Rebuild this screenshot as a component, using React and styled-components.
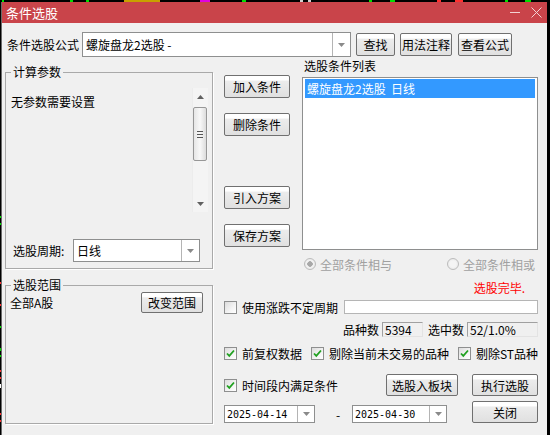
import React from 'react';
import styled, { createGlobalStyle } from 'styled-components';

const GlobalStyle = createGlobalStyle`
  html, body {
    margin: 0;
    padding: 0;
    background: #000;
    overflow: hidden;
  }
  body {
    font-family: "Noto Sans CJK SC", "Noto Sans", sans-serif;
    font-size: 12px;
    color: #000;
  }
`;

// bits of the quote chart that peek out around the dialog
const chartMarks = [
  { x: 2, y: 0, w: 2, h: 2, c: '#00e000' },
  { x: 70, y: 0, w: 3, h: 2, c: '#00e000' },
  { x: 86, y: 0, w: 3, h: 2, c: '#00e000' },
  { x: 124, y: 0, w: 36, h: 2, c: '#c8a000' },
  { x: 200, y: 0, w: 10, h: 2, c: '#e000e0' },
  { x: 242, y: 0, w: 4, h: 2, c: '#00e000' },
  { x: 300, y: 0, w: 3, h: 2, c: '#d0d0d0' },
  { x: 308, y: 0, w: 3, h: 2, c: '#d0d0d0' },
  { x: 369, y: 0, w: 3, h: 2, c: '#00e000' },
  { x: 390, y: 0, w: 5, h: 2, c: '#00e000' },
  { x: 437, y: 0, w: 4, h: 2, c: '#ff3030' },
  { x: 455, y: 0, w: 8, h: 2, c: '#ff3030' },
  { x: 505, y: 0, w: 3, h: 2, c: '#00e000' },
  { x: 525, y: 0, w: 6, h: 2, c: '#00e000' },
  { x: 0, y: 216, w: 1, h: 2, c: '#00e000' },
  { x: 0, y: 223, w: 1, h: 2, c: '#00e000' },
  { x: 0, y: 282, w: 1, h: 2, c: '#ff3030' },
  { x: 0, y: 304, w: 1, h: 2, c: '#ff3030' },
  { x: 0, y: 326, w: 1, h: 2, c: '#00e000' },
  { x: 0, y: 348, w: 1, h: 3, c: '#00e000' },
  { x: 0, y: 355, w: 1, h: 2, c: '#00e000' },
  { x: 0, y: 370, w: 1, h: 2, c: '#ff3030' },
  { x: 0, y: 377, w: 1, h: 2, c: '#ff3030' },
  { x: 0, y: 384, w: 1, h: 4, c: '#ffffff' },
  { x: 0, y: 413, w: 1, h: 2, c: '#ff3030' },
  { x: 0, y: 420, w: 1, h: 2, c: '#ff3030' },
];

const Chart = () => (
  <ChartLayer width="550" height="435">
    {chartMarks.map((m, i) => (
      <rect key={i} x={m.x} y={m.y} width={m.w} height={m.h} fill={m.c} />
    ))}
  </ChartLayer>
);

const Arrow = () => (
  <svg width="7" height="4" viewBox="0 0 7 4">
    <path d="M0 0h7L3.5 4z" fill="#8a8a8a" />
  </svg>
);

const Check = ({ checked }) => (
  <CheckBox>
    {checked && (
      <svg width="9" height="9" viewBox="0 0 9 9">
        <path d="M1 4.5l2.3 2.4L8 1.5" fill="none" stroke="#21a121" strokeWidth="1.8" />
      </svg>
    )}
  </CheckBox>
);

const CheckItem = ({ checked, children }) => (
  <CheckLabel>
    <Check checked={checked} />
    <span>{children}</span>
  </CheckLabel>
);

const Radio = ({ on, children }) => (
  <RadioLabel>
    <RadioDot $on={on} />
    <span>{children}</span>
  </RadioLabel>
);

const Combo = ({ width, height, children, mono }) => (
  <ComboBox style={{ width, height }}>
    <ComboText $mono={mono}>{children}</ComboText>
    <ComboDrop $narrow={mono}>
      <Arrow />
    </ComboDrop>
  </ComboBox>
);

const App = () => {
  return (
    <Page>
      <GlobalStyle />
      <Chart />
      <Window>
        <TitleBar>
          <Title>条件选股</Title>
          <TitleButtons>
            <svg width="11" height="11" viewBox="0 0 11 11">
              <path d="M0 5.5h10" stroke="#f3d2d3" strokeWidth="1" />
            </svg>
            <svg width="11" height="11" viewBox="0 0 11 11">
              <path d="M0.5 0.5l10 10M10.5 0.5l-10 10" stroke="#f3d2d3" strokeWidth="1" />
            </svg>
          </TitleButtons>
        </TitleBar>

        <Body>
          <FormulaRow>
            <FieldLabel>条件选股公式</FieldLabel>
            <Combo width={269} height={25}>螺旋盘龙2选股 -</Combo>
            <Button $w={39} $ml={5}>查找</Button>
            <Button $w={52} $ml={5}>用法注释</Button>
            <Button $w={54} $ml={6}>查看公式</Button>
          </FormulaRow>

          <Main>
            <LeftCol>
              <Group $h={197}>
                <Legend>计算参数</Legend>
                <ParamArea>
                  <ParamText>无参数需要设置</ParamText>
                  <ScrollBar>
                    <ScrollArrow>
                      <svg width="7" height="4" viewBox="0 0 7 4">
                        <path d="M0 4h7L3.5 0z" fill="#606060" />
                      </svg>
                    </ScrollArrow>
                    <ScrollTrack>
                      <Thumb>
                        <Grip />
                        <Grip />
                        <Grip />
                      </Thumb>
                    </ScrollTrack>
                    <ScrollArrow>
                      <svg width="7" height="4" viewBox="0 0 7 4">
                        <path d="M0 0h7L3.5 4z" fill="#606060" />
                      </svg>
                    </ScrollArrow>
                  </ScrollBar>
                </ParamArea>
                <PeriodRow>
                  <PeriodLabel>选股周期:</PeriodLabel>
                  <Combo width={127} height={23}>日线</Combo>
                </PeriodRow>
              </Group>

              <Group $h={139} $mt={16}>
                <Legend>选股范围</Legend>
                <RangeRow>
                  <span>全部A股</span>
                  <Button $w={62} $h={21}>改变范围</Button>
                </RangeRow>
              </Group>
            </LeftCol>

            <RightArea>
              <TopSection>
                <ButtonCol>
                  <Button $w={66} $mt={18}>加入条件</Button>
                  <Button $w={66} $mt={15}>删除条件</Button>
                  <Button $w={66} $mt={50}>引入方案</Button>
                  <Button $w={66} $mt={15}>保存方案</Button>
                </ButtonCol>
                <ListCol>
                  <ListLabel>选股条件列表</ListLabel>
                  <ListBox>
                    <ListItem $selected>螺旋盘龙2选股&nbsp;&nbsp;日线</ListItem>
                  </ListBox>
                </ListCol>
              </TopSection>

              <RadioRow>
                <Radio on>全部条件相与</Radio>
                <Radio>全部条件相或</Radio>
              </RadioRow>

              <StatusRow>选股完毕.</StatusRow>

              <PeriodCheckRow>
                <CheckItem>使用涨跌不定周期</CheckItem>
                <TextInput />
              </PeriodCheckRow>

              <CountsRow>
                <span>品种数</span>
                <CountBox $w={41}>5394</CountBox>
                <span style={{ marginLeft: 5 }}>选中数</span>
                <CountBox $w={71}>52/1.0%</CountBox>
              </CountsRow>

              <OptionsRow>
                <CheckItem checked>前复权数据</CheckItem>
                <CheckItem checked>剔除当前未交易的品种</CheckItem>
                <CheckItem checked>剔除ST品种</CheckItem>
              </OptionsRow>

              <ActionRow>
                <CheckItem checked>时间段内满足条件</CheckItem>
                <Button $w={72} $h={22} $ml="auto">选股入板块</Button>
                <Button $w={66} $h={22} $ml={14}>执行选股</Button>
              </ActionRow>

              <DateRow>
                <DateSlot>
                  <Combo width={91} height={18} mono>2025-04-14</Combo>
                </DateSlot>
                <Dash>-</Dash>
                <DateSlot>
                  <Combo width={95} height={18} mono>2025-04-30</Combo>
                </DateSlot>
                <Button $w={66} $h={22} $ml="auto">关闭</Button>
              </DateRow>
            </RightArea>
          </Main>
        </Body>
      </Window>
    </Page>
  );
};

export default App;

const Page = styled.div`
  position: relative;
  width: 550px;
  height: 435px;
  overflow: hidden;
`;

const ChartLayer = styled.svg`
  position: absolute;
  left: 0;
  top: 0;
`;

const Window = styled.div`
  position: relative;
  box-sizing: border-box;
  margin: 2px 0 0 1px;
  width: 546px;
  height: 433px;
  background: #f0f0f0;
  border-left: 1px solid #6a6a6a;
  display: flex;
  flex-direction: column;
`;

const TitleBar = styled.div`
  height: 21px;
  background: #c9444a;
  display: flex;
  align-items: center;
  padding: 0 5px 0 4px;
  color: #fff;
`;

const Title = styled.span`
  font-size: 13px;
  line-height: 21px;
`;

const TitleButtons = styled.div`
  margin-left: auto;
  display: flex;
  gap: 10px;
  align-items: center;
`;

const Body = styled.div`
  flex: 1;
  padding: 9px 0 0 3px;
`;

const FormulaRow = styled.div`
  display: flex;
  align-items: center;
  height: 25px;
`;

const FieldLabel = styled.span`
  width: 75px;
  margin-left: 2px;
`;

const Button = styled.div`
  box-sizing: border-box;
  width: ${(p) => p.$w}px;
  height: ${(p) => p.$h || 23}px;
  margin-left: ${(p) => (p.$ml === 'auto' ? 'auto' : `${p.$ml || 0}px`)};
  margin-top: ${(p) => p.$mt || 0}px;
  flex-shrink: 0;
  border: 1px solid #707070;
  border-radius: 2px;
  background: linear-gradient(to bottom, #ffffff 0%, #ffffff 18%, #ececec 26%, #e0e0e0 100%);
  display: flex;
  align-items: center;
  justify-content: center;
  font-size: 12px;
  color: #000;
`;

const ComboBox = styled.div`
  box-sizing: border-box;
  display: flex;
  background: #fff;
  border: 1px solid #8e8f8f;
  flex-shrink: 0;
  margin-left: 0;
`;

const ComboText = styled.div`
  flex: 1;
  display: flex;
  align-items: center;
  padding-left: ${(p) => (p.$mono ? 2 : 3)}px;
  font-family: ${(p) => (p.$mono ? '"DejaVu Sans Mono", "Liberation Mono", monospace' : 'inherit')};
  font-size: ${(p) => (p.$mono ? '10px' : '12px')};
  white-space: pre;
`;

const ComboDrop = styled.div`
  width: ${(p) => (p.$narrow ? 16 : 17)}px;
  border-left: 1px solid #b4b4b4;
  display: flex;
  align-items: center;
  justify-content: center;
`;

const Main = styled.div`
  display: flex;
  align-items: flex-start;
`;

const LeftCol = styled.div`
  width: 208px;
  margin-left: 0;
  padding-top: 15px;
  display: flex;
  flex-direction: column;
`;

const Group = styled.div`
  position: relative;
  box-sizing: border-box;
  height: ${(p) => p.$h}px;
  margin-top: ${(p) => p.$mt || 0}px;
  border: 1px solid #a9a9a9;
  box-shadow: 1px 1px 0 #ffffff;
  display: flex;
  flex-direction: column;
`;

const Legend = styled.span`
  position: absolute;
  top: -8px;
  left: 5px;
  padding: 0 2px;
  line-height: 14px;
  background: #f0f0f0;
`;

const ParamArea = styled.div`
  display: flex;
  margin: 15px 4px 0 3px;
  height: 124px;
`;

const ParamText = styled.div`
  flex: 1;
  padding: 6px 0 0 2px;
  line-height: 16px;
`;

const ScrollBar = styled.div`
  width: 15px;
  display: flex;
  flex-direction: column;
  background: #f4f4f4;
  border-left: 1px solid #ececec;
`;

const ScrollArrow = styled.div`
  height: 17px;
  display: flex;
  align-items: center;
  justify-content: center;
`;

const ScrollTrack = styled.div`
  flex: 1;
  padding-top: 2px;
`;

const Thumb = styled.div`
  box-sizing: border-box;
  width: 14px;
  height: 54px;
  border: 1px solid #979797;
  border-radius: 2px;
  background: linear-gradient(to right, #e6e6e6, #f8f8f8 50%, #dcdcdc);
  display: flex;
  flex-direction: column;
  align-items: center;
  justify-content: center;
  gap: 2px;
`;

const Grip = styled.div`
  width: 6px;
  height: 1px;
  background: #555;
`;

const PeriodRow = styled.div`
  display: flex;
  align-items: center;
  margin: 27px 0 0 7px;
`;

const PeriodLabel = styled.span`
  width: 60px;
`;

const RangeRow = styled.div`
  display: flex;
  align-items: center;
  justify-content: space-between;
  margin: 6px 9px 0 4px;
`;

const RightArea = styled.div`
  width: 314px;
  margin-left: 11px;
  display: flex;
  flex-direction: column;
`;

const TopSection = styled.div`
  display: flex;
  height: 193px;
`;

const ButtonCol = styled.div`
  width: 66px;
  display: flex;
  flex-direction: column;
`;

const ListCol = styled.div`
  flex: 1;
  margin-left: 12px;
  display: flex;
  flex-direction: column;
`;

const ListLabel = styled.div`
  height: 20px;
  line-height: 18px;
  padding-left: 2px;
`;

const ListBox = styled.div`
  box-sizing: border-box;
  height: 173px;
  border: 1px solid #8e8f8f;
  background: #fff;
  padding: 1px 2px;
`;

const ListItem = styled.div`
  height: 19px;
  line-height: 19px;
  padding-left: 2px;
  background: ${(p) => (p.$selected ? '#3399ff' : 'transparent')};
  color: ${(p) => (p.$selected ? '#fff' : '#000')};
`;

const RadioRow = styled.div`
  height: 28px;
  display: flex;
  align-items: center;
  justify-content: space-between;
  padding: 0 3px 0 80px;
`;

const RadioLabel = styled.div`
  display: flex;
  align-items: center;
  gap: 4px;
  color: #a0a0a0;
`;

const RadioDot = styled.div`
  box-sizing: border-box;
  width: 12px;
  height: 12px;
  border-radius: 50%;
  border: 1px solid #bcbcbc;
  background: radial-gradient(circle, ${(p) => (p.$on ? '#a8a8a8 0, #a8a8a8 2.5px, ' : '')}#f4f4f4 3px, #e2e2e2 100%);
`;

const StatusRow = styled.div`
  height: 20px;
  line-height: 20px;
  text-align: right;
  padding-right: 13px;
  color: #ff0000;
`;

const PeriodCheckRow = styled.div`
  display: flex;
  align-items: center;
  height: 14px;
  margin-top: 2px;
`;

const CheckLabel = styled.div`
  display: flex;
  align-items: center;
  gap: 5px;
  white-space: nowrap;
`;

const CheckBox = styled.div`
  box-sizing: border-box;
  width: 13px;
  height: 13px;
  border: 1px solid #8e8f8f;
  background: linear-gradient(135deg, #dcdcdc 0%, #f4f4f4 60%, #ffffff 100%);
  display: flex;
  align-items: center;
  justify-content: center;
`;

const TextInput = styled.div`
  box-sizing: border-box;
  margin-left: auto;
  width: 194px;
  height: 14px;
  background: #fff;
  border: 1px solid #b5b5b5;
`;

const CountsRow = styled.div`
  display: flex;
  align-items: center;
  justify-content: flex-end;
  height: 15px;
  margin-top: 8px;
`;

const CountBox = styled.div`
  box-sizing: border-box;
  width: ${(p) => p.$w}px;
  height: 15px;
  margin-left: 3px;
  padding-left: 2px;
  line-height: 13px;
  border: 1px solid;
  border-color: #a0a0a0 #e3e3e3 #e3e3e3 #a0a0a0;
  background: #f0f0f0;
`;

const OptionsRow = styled.div`
  display: flex;
  align-items: center;
  justify-content: space-between;
  height: 14px;
  margin-top: 9px;
`;

const ActionRow = styled.div`
  display: flex;
  align-items: center;
  height: 22px;
  margin-top: 14px;
`;

const DateRow = styled.div`
  display: flex;
  align-items: flex-end;
  height: 22px;
  margin-top: 5px;
`;

const DateSlot = styled.div`
  display: flex;
`;

const Dash = styled.span`
  width: 37px;
  padding-left: 21px;
  box-sizing: border-box;
  line-height: 16px;
`;
